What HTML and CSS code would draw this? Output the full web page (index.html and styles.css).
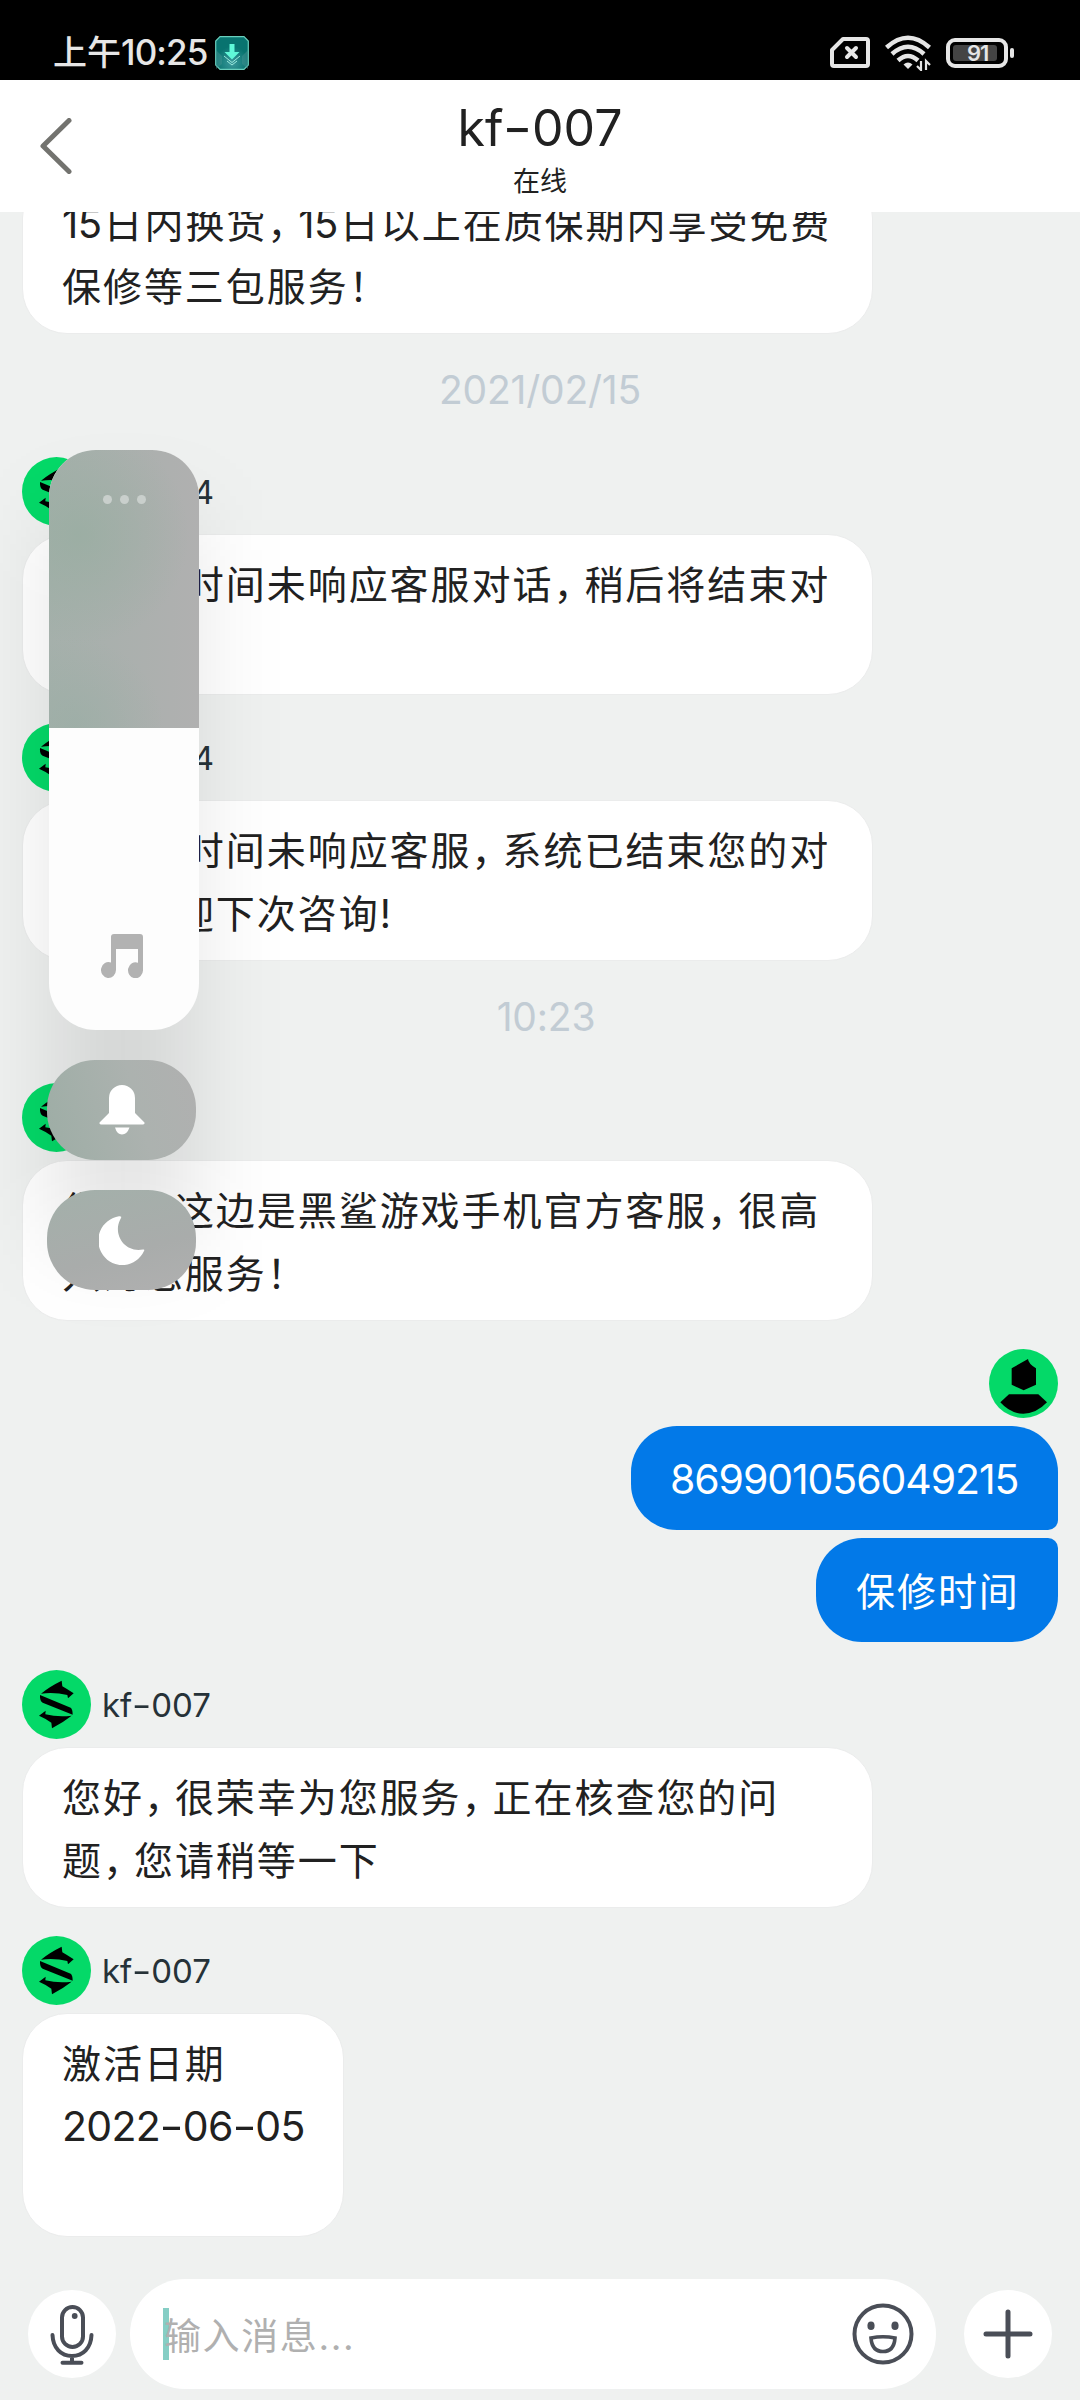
FILE: index.html
```html
<!DOCTYPE html>
<html lang="zh-CN">
<head>
<meta charset="utf-8">
<title>kf-007</title>
<link rel="stylesheet" href="styles.css">
</head>
<body>
<svg class="defs" aria-hidden="true">
  <symbol id="shark" viewBox="0 0 207 207">
    <circle cx="103.5" cy="103.5" r="103.5" fill="#04d968"/>
    <path d="M57 71 Q82 50 119 32 L121 49 Q135 57 155 70 L138 85 L136 75 Q98 66 57 71Z"/>
    <path d="M54 75 L146 113 Q152 117 152 134 L62 98 Q53 93 54 75Z"/>
    <path d="M51 137 L71 122 L70 133 Q108 142 149 137 Q122 158 90 175 L88 158 Q70 145 51 137Z"/>
  </symbol>
</svg>
<div class="phone">
  <div class="status">
    <span class="clock">上午<span class="clock-num">10:25</span></span>
    <svg class="download" width="34" height="34" viewBox="0 0 34 34">
      <defs><radialGradient id="dl" cy=".8"><stop offset="0" stop-color="#3b999c"/><stop offset="1" stop-color="#08736f"/></radialGradient></defs>
      <path d="M5 .7H29L33.3 5V29L29 33.3H5L.7 29V5Z" fill="url(#dl)" stroke="#69cfbd" stroke-width="1.2"/>
      <path d="M1 14L7 20V28L1 33ZM33 14L27 20V28L33 33Z" fill="#41908f" opacity=".5"/>
      <path d="M14.5 8h5v8h5L17 23.5 9.500 16h5Z" fill="#60f8d8"/>
      <path d="M9 20l8 6.500 8-6.500M12 25l5 4 5-4" fill="none" stroke="#9beadd" stroke-width="1"/>
    </svg>
    <span class="spacer"></span>
    <svg width="40" height="31" viewBox="0 0 40 31" fill="none" stroke="#e6e6e6">
      <path d="M13 2H36q2 0 2 2V27q0 2-2 2H4q-2 0-2-2V13Z" stroke-width="4" stroke-linejoin="round"/>
      <path d="M17 11l9 9M26 11l-9 9" stroke-width="4" stroke-linecap="round"/>
    </svg>
    <svg class="wifi" width="46" height="36" viewBox="0 0 46 36" fill="none" stroke="#e6e6e6" stroke-width="4.500">
      <path d="M1.500 12.500Q23-7 44.500 12.500M7 19Q23 4.500 39 19M13 25.500Q23 16.500 33 25.500"/>
      <path d="M18.500 29.500q4.500-4 9 0L23 34Z" fill="#e6e6e6" stroke="none"/>
      <path d="M36 26v9l-4-4M41 35v-9l4 4" stroke-width="2.200"/>
    </svg>
    <div class="battery"><span>91</span></div>
    <i class="nub"></i>
  </div>
  <header class="header">
    <svg class="back" width="32" height="56" viewBox="0 0 32 56"><path d="M29 2.500L3 28L29 53.500" fill="none" stroke="#73736f" stroke-width="5" stroke-linecap="round" stroke-linejoin="round"/></svg>
    <h1>kf<b>-</b>007</h1>
    <p>在线</p>
  </header>
  <main class="chat">
    <div class="bubble wide first"><p><span class="n">15</span>日内换货<i>，</i><span class="n">15</span>日以上在质保期内享受免费</p><p>保修等三包服务<i>！</i></p></div>
    <time class="date d1">2021/02/15</time>
    <div class="who"><svg class="avatar"><use href="#shark"/></svg><span>kf<b>-</b>004</span></div>
    <div class="bubble wide"><p>您已长时间未响应客服对话<i>，</i>稍后将结束对</p><p>话。</p></div>
    <div class="who"><svg class="avatar"><use href="#shark"/></svg><span>kf<b>-</b>004</span></div>
    <div class="bubble wide"><p>您已长时间未响应客服<i>，</i>系统已结束您的对</p><p>话<i>，</i>欢迎下次咨询!</p></div>
    <time class="date d2">10:23</time>
    <div class="who"><svg class="avatar"><use href="#shark"/></svg></div>
    <div class="bubble wide"><p>您好<i>，</i>这边是黑鲨游戏手机官方客服<i>，</i>很高</p><p>兴为您服务<i>！</i></p></div>
    <div class="who me"><svg class="avatar" viewBox="0 0 207 207">
      <circle cx="103.500" cy="103.500" r="103.500" fill="#04d968"/>
      <path d="M68 58L117 30Q118 44 141 58V107L104 124L68 107Z"/>
      <path d="M60 136H148L174 160Q142 194 103 194T34 160Z"/>
    </svg></div>
    <div class="bubble mine top"><p class="imei">869901056049215</p></div>
    <div class="bubble mine bottom"><p>保修时间</p></div>
    <div class="who"><svg class="avatar"><use href="#shark"/></svg><span>kf<b>-</b>007</span></div>
    <div class="bubble wide"><p>您好<i>，</i>很荣幸为您服务<i>，</i>正在核查您的问</p><p>题<i>，</i>您请稍等一下</p></div>
    <div class="who"><svg class="avatar"><use href="#shark"/></svg><span>kf<b>-</b>007</span></div>
    <div class="bubble dated"><p>激活日期</p><p class="day">2022<b>-</b>06<b>-</b>05</p><p>&nbsp;</p></div>
  </main>
  <footer class="composer">
    <div class="round"><svg width="88" height="88" viewBox="0 0 88 88" fill="none" stroke="#4a4e57" stroke-width="4" stroke-linecap="round">
      <rect x="34" y="17" width="21" height="40" rx="10.500"/>
      <circle cx="46.700" cy="26" r="2.900" fill="#4a4e57" stroke="none"/>
      <path d="M24.500 45C25 58 33 66 44 66S63 58 63.500 45M44 66V72M34.500 72.800H53.500"/>
    </svg></div>
    <div class="field"><i class="caret"></i><span>输入消息...</span>
      <svg width="62" height="62" viewBox="0 0 62 62" fill="none" stroke="#4a4e57" stroke-width="4">
        <circle cx="31" cy="31" r="28.500"/>
        <ellipse cx="19" cy="22.700" rx="3.600" ry="4.300" fill="#4a4e57" stroke="none"/>
        <ellipse cx="43" cy="22.700" rx="3.600" ry="4.300" fill="#4a4e57" stroke="none"/>
        <path d="M19 35Q31 32.500 43 35Q42 48.500 31 48.500T19 35Z" stroke-width="3.600"/>
      </svg>
    </div>
    <div class="round plus"><svg width="88" height="88" viewBox="0 0 88 88" stroke="#4a4e57" stroke-width="5" stroke-linecap="round"><path d="M44 22V66M22 44H66"/></svg></div>
  </footer>
  <aside class="volume">
    <div class="slider">
      <div class="level"><i></i><i></i><i></i></div>
      <svg width="42" height="44" viewBox="0 0 42 44" fill="#b2b2b2"><path d="M10 3q0-3 3-3H39q3 0 3 3V36a7.500 8 0 1 1-5-7.300V15H15V36a7.500 8 0 1 1-5-7.600Z"/></svg>
    </div>
    <div class="key ring"><svg width="46" height="50" viewBox="0 0 46 50" fill="#fff"><path d="M10 13a13 13 0 0 1 26 0V28L45.500 37.500Q46 39.500 44 39.500H2Q0 39.500 .5 37.500L10 28ZM16 42.500H30.500Q28 49.500 23 49.500T16 42.500Z"/></svg></div>
    <div class="key night"><svg width="46" height="49" viewBox="0 0 46 49" fill="#fff"><path d="M22 1Q23 0 21 4C14 18 25 37 44 33.500Q46 33 45 35A24 24.500 0 1 1 20 .3Q22-.2 22 1Z"/></svg></div>
  </aside>
</div>
</body>
</html>
```
FILE: styles.css
```css
* { box-sizing: border-box; }
body, h1, p { margin: 0; }
body { background: #eff1f0; }
i, b { font-style: normal; font-weight: inherit; }
svg { display: block; flex: none; }
.defs { position: absolute; width: 0; height: 0; }

.phone {
  position: relative;
  display: flex;
  flex-direction: column;
  width: 1080px;
  height: 2400px;
  overflow: hidden;
  background: #eff1f0;
  color: #212121;
  font-family: Inter, "Noto Sans CJK SC", sans-serif;
}

.status {
  display: flex;
  align-items: center;
  height: 80px;
  padding: 25px 70px 0 53px;
  background: #000;
  color: #e6e6e6;
}
.clock { font-size: 34px; line-height: 54px; font-weight: 500; white-space: nowrap; }
.clock-num { font-size: 35px; letter-spacing: -.9px; }
.download { margin-left: 8px; }
.spacer { flex: 1; }
.wifi { margin: 0 15px; }
.battery {
  display: flex;
  align-items: center;
  width: 62px;
  height: 30px;
  padding: 3px;
  border: 4px solid #e6e6e6;
  border-radius: 9px;
}
.battery span {
  width: 44px;
  height: 16px;
  padding-left: 14px;
  border-radius: 3px;
  background: #444;
  font-size: 22px;
  line-height: 17px;
  font-weight: 600;
  letter-spacing: -1px;
}
.nub { width: 4px; height: 10px; margin-left: 2px; margin-right: -4px; border-radius: 2px; background: #e6e6e6; }

.header {
  display: grid;
  grid-template-columns: 72px 1fr 72px;
  grid-template-rows: 76px 35px;
  height: 132px;
  padding-top: 9px;
  background: #fff;
  text-align: center;
}
.header h1 { grid-column: 2; font-size: 50px; font-weight: 400; line-height: 79px; }
.header p { grid-column: 2; font-size: 27px; line-height: 34px; }
.back { grid-row: 1 / 3; grid-column: 1; margin: 29px 0 0 40px; }

/* the hyphen is drawn as wide as a short dash */
b { display: inline-block; margin: 0 .055em; transform: scaleX(1.3); }

.chat {
  display: flex;
  flex-direction: column;
  height: 2048px;
  padding: 0 22px;
  overflow: hidden;
}
.bubble {
  flex: none;
  align-self: flex-start;
  padding: 18px 39px 16px;
  border: 1px solid #ebecec;
  border-radius: 45px;
  background: #fff;
  font-size: 39px;
  letter-spacing: 1.95px;
  white-space: nowrap;
}
.bubble p { height: 63px; line-height: 63px; }
.bubble i { letter-spacing: -8px; }
.wide { width: 851px; height: 161px; padding-block: 18px 15px; margin-top: -1px; }
.first { margin-top: -39px; }
.n { display: inline-block; width: 41.5px; font-size: 40px; letter-spacing: -.5px; line-height: 1; }
.date {
  flex: none;
  align-self: center;
  color: #c2ccd4;
  font-size: 39px;
  line-height: 54px;
  letter-spacing: -.2px;
}
.d1 { margin: 29px 0 40px; }
.d2 { margin: 29px 0 39px; padding-left: 12px; }
.who { display: flex; flex: none; align-items: center; gap: 11px; height: 69px; margin: 28px 0 9px; font-size: 33px; color: #263238; }
.d1 + .who, .d2 + .who { margin-top: 0; }
.avatar { width: 69px; height: 69px; }
.me { justify-content: flex-end; margin-bottom: 8px; }
.mine {
  align-self: flex-end;
  height: 104px;
  padding: 22px 38px 0 39px;
  border: 0;
  border-radius: 46px;
  background: #0279e8;
  color: #fff;
}
.top { width: 427px; border-bottom-right-radius: 10px; }
.bottom { width: 242px; margin-top: 8px; padding-left: 40px; border-top-right-radius: 10px; }
.imei { font-size: 41px; letter-spacing: -1.1px; }
.mine + .who { margin-top: 28px; }
.dated { width: 322px; height: 224px; padding-top: 18px; margin-top: -1px; }
.day { font-size: 41px; letter-spacing: -.7px; }

.composer {
  display: flex;
  align-items: center;
  height: 110px;
  margin-top: 19px;
  padding: 0 28px;
}
.round { flex: none; width: 88px; height: 88px; border-radius: 50%; background: #fff; }
.plus { margin-left: auto; }
.field {
  position: relative;
  display: flex;
  flex: none;
  align-items: center;
  justify-content: space-between;
  width: 806px;
  height: 110px;
  margin-left: 14px;
  padding: 0 22px 0 34px;
  border-radius: 55px;
  background: #fff;
  color: #b0b0b0;
  font-size: 37px;
  letter-spacing: 1.6px;
}
.field span { position: relative; }
.caret { position: absolute; left: 33px; top: 29px; width: 6px; height: 52px; background: #86cec5; }

/* floating system volume panel */
.volume {
  position: absolute;
  left: 47px;
  top: 450px;
  width: 152px;
}
.volume::before {
  content: "";
  position: absolute;
  inset: 70px 8px 50px 8px;
  background: rgba(0, 0, 0, .115);
  filter: blur(46px);
}
.slider {
  position: relative;
  display: flex;
  flex-direction: column;
  align-items: center;
  width: 150px;
  height: 580px;
  margin-left: 2px;
  overflow: hidden;
  border-radius: 47px;
  background: #fdfdfd;
}
.level {
  display: flex;
  justify-content: center;
  gap: 8px;
  width: 150px;
  height: 278px;
  padding-top: 45px;
  background:
    radial-gradient(circle at 30px 85px, rgba(151, 173, 160, .7), transparent 110px),
    radial-gradient(circle at 25px 278px, rgba(151, 173, 163, .55), transparent 90px),
    linear-gradient(90deg, #a5b0ab, #b0b0b0);
}
.level i { width: 9px; height: 9px; border-radius: 50%; background: #c9cfcc; }
.slider svg { margin: 206px 5px 0 0; }
.key {
  position: relative;
  display: flex;
  align-items: center;
  justify-content: center;
  width: 149px;
  height: 100px;
  margin-top: 30px;
  border-radius: 48px;
}
.ring { background: linear-gradient(75deg, #9dada5, #acb2af 60%, #b0b0b0); }
.night { background: linear-gradient(165deg, #a3b0aa, #a9acab 60%, #b0b0b0); }
```
